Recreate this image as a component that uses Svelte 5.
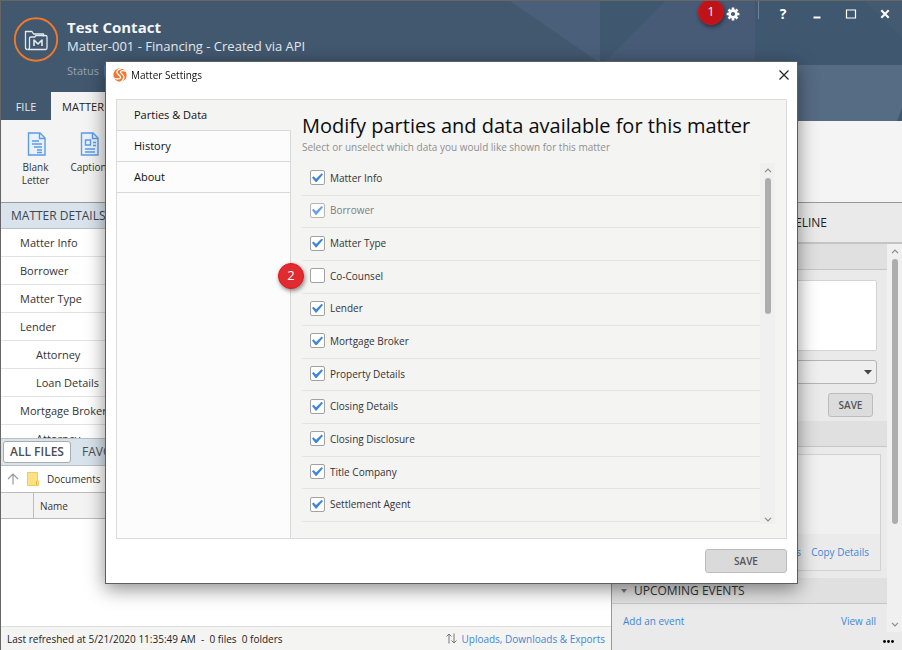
<script>
  const matterItems = [
    { label: 'Matter Info' },
    { label: 'Borrower' },
    { label: 'Matter Type' },
    { label: 'Lender' },
    { label: 'Attorney', child: true },
    { label: 'Loan Details', child: true },
    { label: 'Mortgage Broker' },
    { label: 'Attorney', child: true }
  ];

  const settingsTabs = ['Parties & Data', 'History', 'About'];
  let activeTab = $state('Parties & Data');

  let options = $state([
    { label: 'Matter Info', on: true },
    { label: 'Borrower', on: true, locked: true },
    { label: 'Matter Type', on: true },
    { label: 'Co-Counsel', on: false, badge: '2' },
    { label: 'Lender', on: true },
    { label: 'Mortgage Broker', on: true },
    { label: 'Property Details', on: true },
    { label: 'Closing Details', on: true },
    { label: 'Closing Disclosure', on: true },
    { label: 'Title Company', on: true },
    { label: 'Settlement Agent', on: true }
  ]);
</script>

{#snippet scrollbar(grow, rest)}
  <div class="scrollbar" aria-hidden="true">
    <svg width="8" height="5" viewBox="0 0 8 5"><path d="M1 4.2 4 1.2 7 4.2" fill="none" stroke="#8a8a8a" stroke-width="1.2" /></svg>
    <div class="lane">
      <div class="thumb" style="flex-grow: {grow}"></div>
      <div style="flex-grow: {rest}"></div>
    </div>
    <svg width="8" height="5" viewBox="0 0 8 5"><path d="M1 .8 4 3.8 7 .8" fill="none" stroke="#8a8a8a" stroke-width="1.2" /></svg>
  </div>
{/snippet}

<div class="app">
  <header class="top">
    <svg class="facets" width="392" height="120" viewBox="0 0 392 120" aria-hidden="true">
      <polygon points="0,0 90,0 90,62" fill="#4a607a" />
      <rect x="90" width="302" height="120" fill="#3f5870" />
      <polygon points="155,0 245,0 245,120 35,120" fill="#475b77" />
      <polygon points="355,0 392,0 392,37" fill="#435a70" />
      <rect x="245" y="64" width="147" height="56" fill="#566b84" />
      <polygon points="392,107 392,120 387,120" fill="#3f5870" />
    </svg>

    <div class="identity">
      <svg class="logo" width="46" height="46" viewBox="0 0 46 46" aria-hidden="true">
        <circle cx="23" cy="22.500" r="21.2" fill="none" stroke="#f0782a" stroke-width="1.9" />
        <g fill="none" stroke="#e4e9ef" stroke-width="1.3" stroke-linejoin="round">
          <path d="M14.5 32.5c-1.500 0-2-.7-2-2v-16h6.500l1.500 2.500h10v2.500" />
          <path d="M16.500 30.500v-9.300q0-1.200 1.200-1.200h4l1.200-1.500h9.500q1.600 0 1.600 1.500v11q0 1.500-1.500 1.500H15q1.500-.3 1.500-2z" />
          <path d="M21 29v-6l4 4 4-4v6" stroke-width="1.600" />
        </g>
      </svg>
      <div class="names">
        <h1>Test Contact</h1>
        <p class="sub">Matter-001 - Financing - Created via API</p>
        <p class="status">Status <span class="pill"></span></p>
      </div>
    </div>

    <div class="window-buttons">
      <div class="gear-wrap">
        <button aria-label="Settings">
          <svg width="14" height="14" viewBox="0 0 14 14">
            <circle cx="7" cy="7" r="3.400" fill="none" stroke="#fff" stroke-width="2.600" />
            <g stroke="#fff" stroke-width="2.600">
              <path d="M7 .6v2.400M7 11v2.400M.6 7H3M11 7h2.400M2.500 2.500l1.700 1.700M9.800 9.800l1.700 1.700M11.500 2.500 9.800 4.200M4.200 9.800l-1.700 1.700" />
            </g>
          </svg>
        </button>
        <span class="badge dark">1</span>
      </div>
      <span class="sep"></span>
      <button class="help" aria-label="Help">?</button>
      <button aria-label="Minimize"><svg width="12" height="12" viewBox="0 0 12 12"><path d="M2.500 9.500h7" stroke="#fff" stroke-width="2" /></svg></button>
      <button aria-label="Maximize"><svg width="12" height="12" viewBox="0 0 12 12"><path d="M1.500 2h9v8h-9z" fill="none" stroke="#fff" stroke-width="1.200" /></svg></button>
      <button aria-label="Close"><svg width="12" height="12" viewBox="0 0 12 12"><path d="m2.300 2.300 7.400 7.400m0-7.400-7.400 7.400" stroke="#fff" stroke-width="2" /></svg></button>
    </div>

    <nav class="ribbon-tabs">
      <button>FILE</button>
      <button class="current">MATTER</button>
    </nav>
  </header>

  <div class="ribbon">
    <button>
      <svg width="20" height="24" viewBox="0 0 20 24" fill="none" stroke="#5c9be6" stroke-width="1.400">
        <path d="M1.500 1h11.500l5 5v17H1.500z" fill="#e9f2fc" /><path d="M12.500 1v5.500H18" />
        <path d="M5 9h7M5 12h10M7 15h8M10 18h5M10 20.500h5" />
      </svg>
      <span>Blank Letter</span>
    </button>
    <button>
      <svg width="20" height="24" viewBox="0 0 20 24" fill="none" stroke="#5c9be6" stroke-width="1.400">
        <path d="M1.500 1h11.500l5 5v17H1.500z" fill="#e9f2fc" /><path d="M12.500 1v5.500H18" />
        <path d="M5.500 8h5v5h-5zM13 10.500h3M13 13.500h3M5 17h10M5 20h10" />
      </svg>
      <span>Caption</span>
    </button>
  </div>

  <div class="workspace">
    <main>
      <h2 class="bar details">MATTER DETAILS</h2>
      <ul class="tree">
        {#each matterItems as item}
          <li class:child={item.child}>{item.label}</li>
        {/each}
      </ul>
      <div class="bar files">
        <button class="current">ALL FILES</button>
        <button>FAVORITES</button>
      </div>
      <div class="crumbs">
        <svg width="12" height="12" viewBox="0 0 12 12" aria-hidden="true"><path d="M6 11.500V1M1 6l5-5 5 5" fill="none" stroke="#9a9a9a" stroke-width="1.200" /></svg>
        <svg width="12" height="14" viewBox="0 0 12 14" aria-hidden="true"><path d="M.5.5h10v8l1 .5v4.500H.5z" fill="#ffe083" stroke="#f1cb5d" /><path d="M9.500 13V9.500l1-1" fill="none" stroke="#e0b440" /></svg>
        <span>Documents</span>
      </div>
      <table>
        <thead><tr><th class="mark" aria-label="Marker"></th><th>Name</th></tr></thead>
      </table>
      <footer>
        <span>Last refreshed at 5/21/2020 11:35:49 AM &nbsp;-&nbsp; 0 files &nbsp;0 folders</span>
        <a href="#transfers">
          <svg width="11" height="11" viewBox="0 0 11 11" aria-hidden="true"><path d="M3 10.500V1M.5 3.500 3 1l2.500 2.500M8 .5V10M5.500 7.500 8 10l2.500-2.500" fill="none" stroke="#777" /></svg>
          Uploads, Downloads &amp; Exports
        </a>
      </footer>
    </main>

    <aside>
      <div class="side-tabs"><button>NOTES</button><button>TIMELINE</button></div>
      <div class="side-scroll">
        <div class="side-body">
          <h3></h3>
          <div class="note">
            <textarea aria-label="Note"></textarea>
            <div class="picker">
              <select aria-label="Note type"><option></option></select>
              <svg width="8" height="5" viewBox="0 0 8 5" aria-hidden="true"><path d="M0 0h8L4 4.500z" fill="#444" /></svg>
            </div>
            <button class="gray">SAVE</button>
          </div>
          <h3></h3>
          <div class="card">
            <div class="card-links"><a href="#edit">Edit Details</a><a href="#copy">Copy Details</a></div>
          </div>
          <h3><svg width="6" height="4" viewBox="0 0 6 4" aria-hidden="true"><path d="M0 0h6L3 4z" fill="#777" /></svg>UPCOMING EVENTS</h3>
          <div class="events"><a href="#add">Add an event</a><a href="#all">View all</a></div>
        </div>
        {@render scrollbar(266, 94)}
      </div>
      <div class="more">
        <button aria-label="More"><svg width="11" height="3" viewBox="0 0 11 3"><circle cx="1.500" cy="1.500" r="1.400" /><circle cx="5.500" cy="1.500" r="1.400" /><circle cx="9.500" cy="1.500" r="1.400" /></svg></button>
      </div>
    </aside>
  </div>
</div>

<div class="dialog" role="dialog" aria-labelledby="dialog-title">
  <div class="titlebar">
    <svg width="14" height="14" viewBox="0 0 14 14" aria-hidden="true">
      <circle cx="7" cy="7" r="6.700" fill="#ef7832" />
      <g fill="none" stroke="#fff" stroke-width="1.300">
        <path d="M13.800 3.400C10 2.200 7.400 2.500 7.600 4.300c.2 1.600 3.300 2 3.300 4.600 0 2.200-1.500 4-3.700 5.300" />
        <path d="M9.500.2C6 1 3.700 2.500 4 4.600c.3 2 3.800 2.800 3.600 4.800C7.400 11.300 3.800 11.500.8 10" />
      </g>
    </svg>
    <span id="dialog-title">Matter Settings</span>
    <button aria-label="Close settings"><svg width="12" height="12" viewBox="0 0 12 12"><path d="m1.500 1.500 9 9m0-9-9 9" stroke="#222" stroke-width="1.200" /></svg></button>
  </div>

  <div class="panel">
    <nav>
      {#each settingsTabs as tab}
        <button class:active={tab === activeTab} onclick={() => (activeTab = tab)}>{tab}</button>
      {/each}
    </nav>
    <section>
      <h2>Modify parties and data available for this matter</h2>
      <p>Select or unselect which data you would like shown for this matter</p>
      <div class="list">
        <ul>
          {#each options as option}
            <li>
              <label class:locked={option.locked}>
                <input type="checkbox" bind:checked={option.on} disabled={option.locked} />
                {option.label}
              </label>
              {#if option.badge}<span class="badge">{option.badge}</span>{/if}
            </li>
          {/each}
        </ul>
        {@render scrollbar(136, 198)}
      </div>
    </section>
  </div>

  <div class="actions"><button class="gray wide">SAVE</button></div>
</div>

<style>
  :global(body) {
    font-family: 'Open Sans', 'Noto Sans', sans-serif;
    font-size: 11px;
    line-height: 14px;
    color: #333;
    background: #fff;
  }
  h1, h2, h3, p, ul { margin: 0; padding: 0; font-weight: 400; list-style: none; }
  button, input, select, textarea { font: inherit; color: inherit; margin: 0; box-sizing: border-box; }
  button { border: 0; padding: 0; background: none; }
  a { color: #3f87d9; text-decoration: none; }
  svg { display: block; flex: none; }

  .app {
    display: flex;
    flex-direction: column;
    height: 100vh;
    min-height: 600px;
    box-sizing: border-box;
    border: solid #666;
    border-width: 1px 0 0 1px;
    overflow: hidden;
  }

  .top {
    position: relative;
    display: grid;
    grid-template-columns: 1fr auto;
    grid-template-rows: 1fr 28px;
    flex: none;
    height: 119px;
    color: #fff;
    background: #42586f;
  }
  .facets { position: absolute; top: 0; right: 0; }
  .identity { display: flex; gap: 8px; padding: 16px 0 0 12px; position: relative; }
  .names { display: flex; flex-direction: column; }
  h1 { font-size: 15px; line-height: 20px; font-weight: 700; color: #f3f5f7; }
  .sub { font-size: 13px; line-height: 18px; color: #e3e8ee; }
  .status { display: flex; gap: 5px; margin-top: 9px; color: #94a3b5; }
  .pill { width: 60px; height: 14px; border-radius: 3px; background: #4b73ad; }
  .window-buttons { position: relative; display: flex; height: 26px; }
  .window-buttons button { display: flex; align-items: center; justify-content: center; width: 34px; height: 25px; color: #fff; }
  .window-buttons .help { font-size: 14px; font-weight: 700; }
  .gear-wrap { position: relative; }
  .sep { width: 1px; height: 18px; margin: 0 7px 0 8px; background: #71839a; }
  .badge {
    position: absolute;
    left: -24px;
    top: 2px;
    width: 24px;
    height: 24px;
    border: 1px solid #f01218;
    border-radius: 50%;
    background: #e02b30;
    color: #fff;
    font-size: 13px;
    line-height: 23px;
    text-align: center;
    box-shadow: 1px 2px 4px rgb(0 0 0 / 45%);
  }
  .badge.dark { left: -18px; top: -2px; background: #c01219; border-color: #e01018; }
  .ribbon-tabs { position: relative; grid-column: 1 / -1; display: flex; }
  .ribbon-tabs button { width: 50px; padding-top: 2px; color: #e6eaef; }
  .ribbon-tabs .current { width: 64px; color: #222; background: #f4f4f4; }

  .ribbon {
    display: flex;
    flex: none;
    height: 70px;
    padding: 12px 8px 0;
    background: #f4f4f4;
    border-bottom: 1px solid #999;
  }
  .ribbon button { display: flex; flex-direction: column; align-items: center; gap: 5px; width: 53px; font-size: 10px; line-height: 13px; }
  .ribbon svg { margin-left: 3px; }
  .ribbon span { max-width: 44px; }

  .workspace { display: flex; flex: 1; min-height: 0; }
  main { display: flex; flex-direction: column; flex: 1; min-width: 0; background: #fff; }
  .bar { flex: none; box-sizing: border-box; height: 26px; background: #d9e3ec; border-bottom: 1px solid #b9c1c8; }
  .details { padding-left: 10px; font-size: 12px; line-height: 26px; color: #3c4650; }
  .tree { flex: none; height: 209px; overflow: hidden; }
  .tree li { padding-left: 19px; line-height: 27px; border-bottom: 1px solid #e2e2e2; }
  .tree .child { padding-left: 35px; }
  .files { display: flex; align-items: center; gap: 4px; height: 28px; padding-left: 2px; border-top: 1px solid #b9c1c8; color: #4a4f54; }
  .files button { height: 22px; padding: 0 6px; font-size: 12px; line-height: 20px; border: 1px solid transparent; }
  .files .current { font-weight: 600; background: #fff; border-color: #aaa; border-radius: 3px; }
  .crumbs { display: flex; flex: none; align-items: center; gap: 8px; height: 26px; padding-left: 6px; font-size: 10px; }
  table { flex: none; width: 100%; border-collapse: collapse; }
  th { height: 25px; padding: 0 6px; font-size: 10px; font-weight: 400; text-align: left; background: #f3f3f3; border: solid #bcbcbc; border-width: 1px 0; }
  .mark { width: 20px; border-right-width: 1px; }
  footer {
    display: flex;
    align-items: center;
    justify-content: space-between;
    height: 23px;
    margin-top: auto;
    padding: 0 6px;
    font-size: 10px;
    color: #222;
    background: #f4f4f3;
    border-top: 1px solid #ddd;
  }
  footer a { display: flex; align-items: center; gap: 4px; }

  aside { display: flex; flex-direction: column; flex: none; width: 290px; background: #eaeaea; border-left: 1px solid #999; }
  .side-tabs { display: flex; justify-content: flex-end; gap: 40px; flex: none; height: 39px; padding-right: 75px; font-size: 12px; color: #222; border-bottom: 2px solid #c4c4c4; }
  .side-scroll { display: flex; flex: 1; min-height: 0; }
  .side-body { flex: 1; min-width: 0; }
  h3 { display: flex; align-items: center; gap: 7px; box-sizing: border-box; height: 26px; padding-left: 9px; font-size: 12px; background: #e0e0e0; border-bottom: 1px solid #c6c6c6; }
  .note { display: flex; flex-direction: column; align-items: flex-end; gap: 9px; padding: 10px 10px 4px; }
  .note textarea { width: 100%; height: 71px; resize: none; background: #fff; border: 1px solid #d4d4d4; border-radius: 2px; }
  .picker { position: relative; width: 100%; }
  .picker select { display: block; width: 100%; height: 24px; appearance: none; background: #efefef; border: 1px solid #b4b4b4; border-radius: 3px; }
  .picker svg { position: absolute; right: 5px; top: 10px; }
  .gray { height: 24px; padding: 0 9px; font-size: 10px; font-weight: 600; color: #555; background: #dcdcdc; border: 1px solid #bcbcbc; border-radius: 3px; }
  .note .gray { width: 45px; margin-right: 4px; }
  .card { display: flex; align-items: flex-end; height: 115px; margin: 7px 6px 7px 10px; background: #f1f1f1; border: 1px solid #d2d2d2; }
  .card-links { display: flex; flex: 1; justify-content: flex-end; gap: 10px; padding: 11px; font-size: 10px; background: #ebebeb; }
  .events { display: flex; justify-content: space-between; padding: 10px 11px; font-size: 10px; }
  .more { display: flex; justify-content: flex-end; align-items: center; flex: none; height: 18px; padding-right: 8px; }

  .scrollbar { display: flex; flex-direction: column; align-items: center; justify-content: space-between; gap: 5px; flex: none; width: 15px; padding: 5px 0; box-sizing: border-box; background: #f0f0f0; }
  .lane { display: flex; flex-direction: column; flex: 1; width: 6px; }
  .thumb { background: #adadad; border-radius: 3px; }

  .dialog {
    position: fixed;
    inset: 61px 104px 66px 105px;
    display: flex;
    flex-direction: column;
    box-sizing: border-box;
    padding: 0 10px;
    background: #fff;
    border: 1px solid #5c5f61;
    box-shadow: 0 5px 18px rgb(0 0 0 / 45%);
  }
  .titlebar { display: flex; align-items: center; gap: 4px; flex: none; height: 26px; padding-bottom: 11px; margin: 0 -3px; font-size: 10px; color: #111; }
  .titlebar button { margin-left: auto; }
  .panel { display: flex; flex: 1; min-height: 0; background: #f4f4f3; border: 1px solid #dadcdc; }
  .panel nav { display: flex; flex-direction: column; flex: none; width: 174px; box-sizing: border-box; color: #111; background: #fcfcfc; }
  .panel nav::after { content: ''; flex: 1; border-right: 1px solid #d8d8d8; }
  .panel nav button { height: 31px; padding-left: 17px; text-align: left; border: solid #d8d8d8; border-width: 0 1px 1px 0; }
  .panel nav .active { background: #f4f4f3; border-right-color: #f4f4f3; }
  section { display: flex; flex-direction: column; flex: 1; min-width: 0; padding: 12px 11px 14px; }
  section h2 { font-size: 20px; line-height: 28px; color: #0c0c0c; white-space: nowrap; }
  section p { font-size: 10px; color: #8f8f8f; }
  .list { display: flex; flex: 1; min-height: 0; margin-top: 9px; }
  .list ul { display: grid; grid-auto-rows: 1fr; flex: 1; margin-bottom: 2px; }
  .list li { position: relative; display: flex; align-items: center; padding: 0 0 2px 8px; border-bottom: 1px solid #e4e4e4; }
  .list .scrollbar { padding-bottom: 2px; }
  label { display: flex; align-items: center; gap: 5px; font-size: 10px; }
  .locked { color: #7c7c7c; }
  label input { appearance: none; width: 15px; height: 15px; background: #fff; border: 1px solid #a2a2a2; border-radius: 2px; }
  label input:checked::before {
    content: '';
    display: block;
    width: 11px;
    height: 9px;
    margin: 2px 1px;
    background: #3c86e0;
    clip-path: polygon(0 46%, 14% 32%, 37% 60%, 88% 0, 100% 14%, 40% 100%, 34% 100%);
  }
  .locked input { opacity: .75; }
  .actions { display: flex; justify-content: flex-end; flex: none; padding: 10px 0; }
  .wide { width: 82px; background: #dadada; }
</style>
